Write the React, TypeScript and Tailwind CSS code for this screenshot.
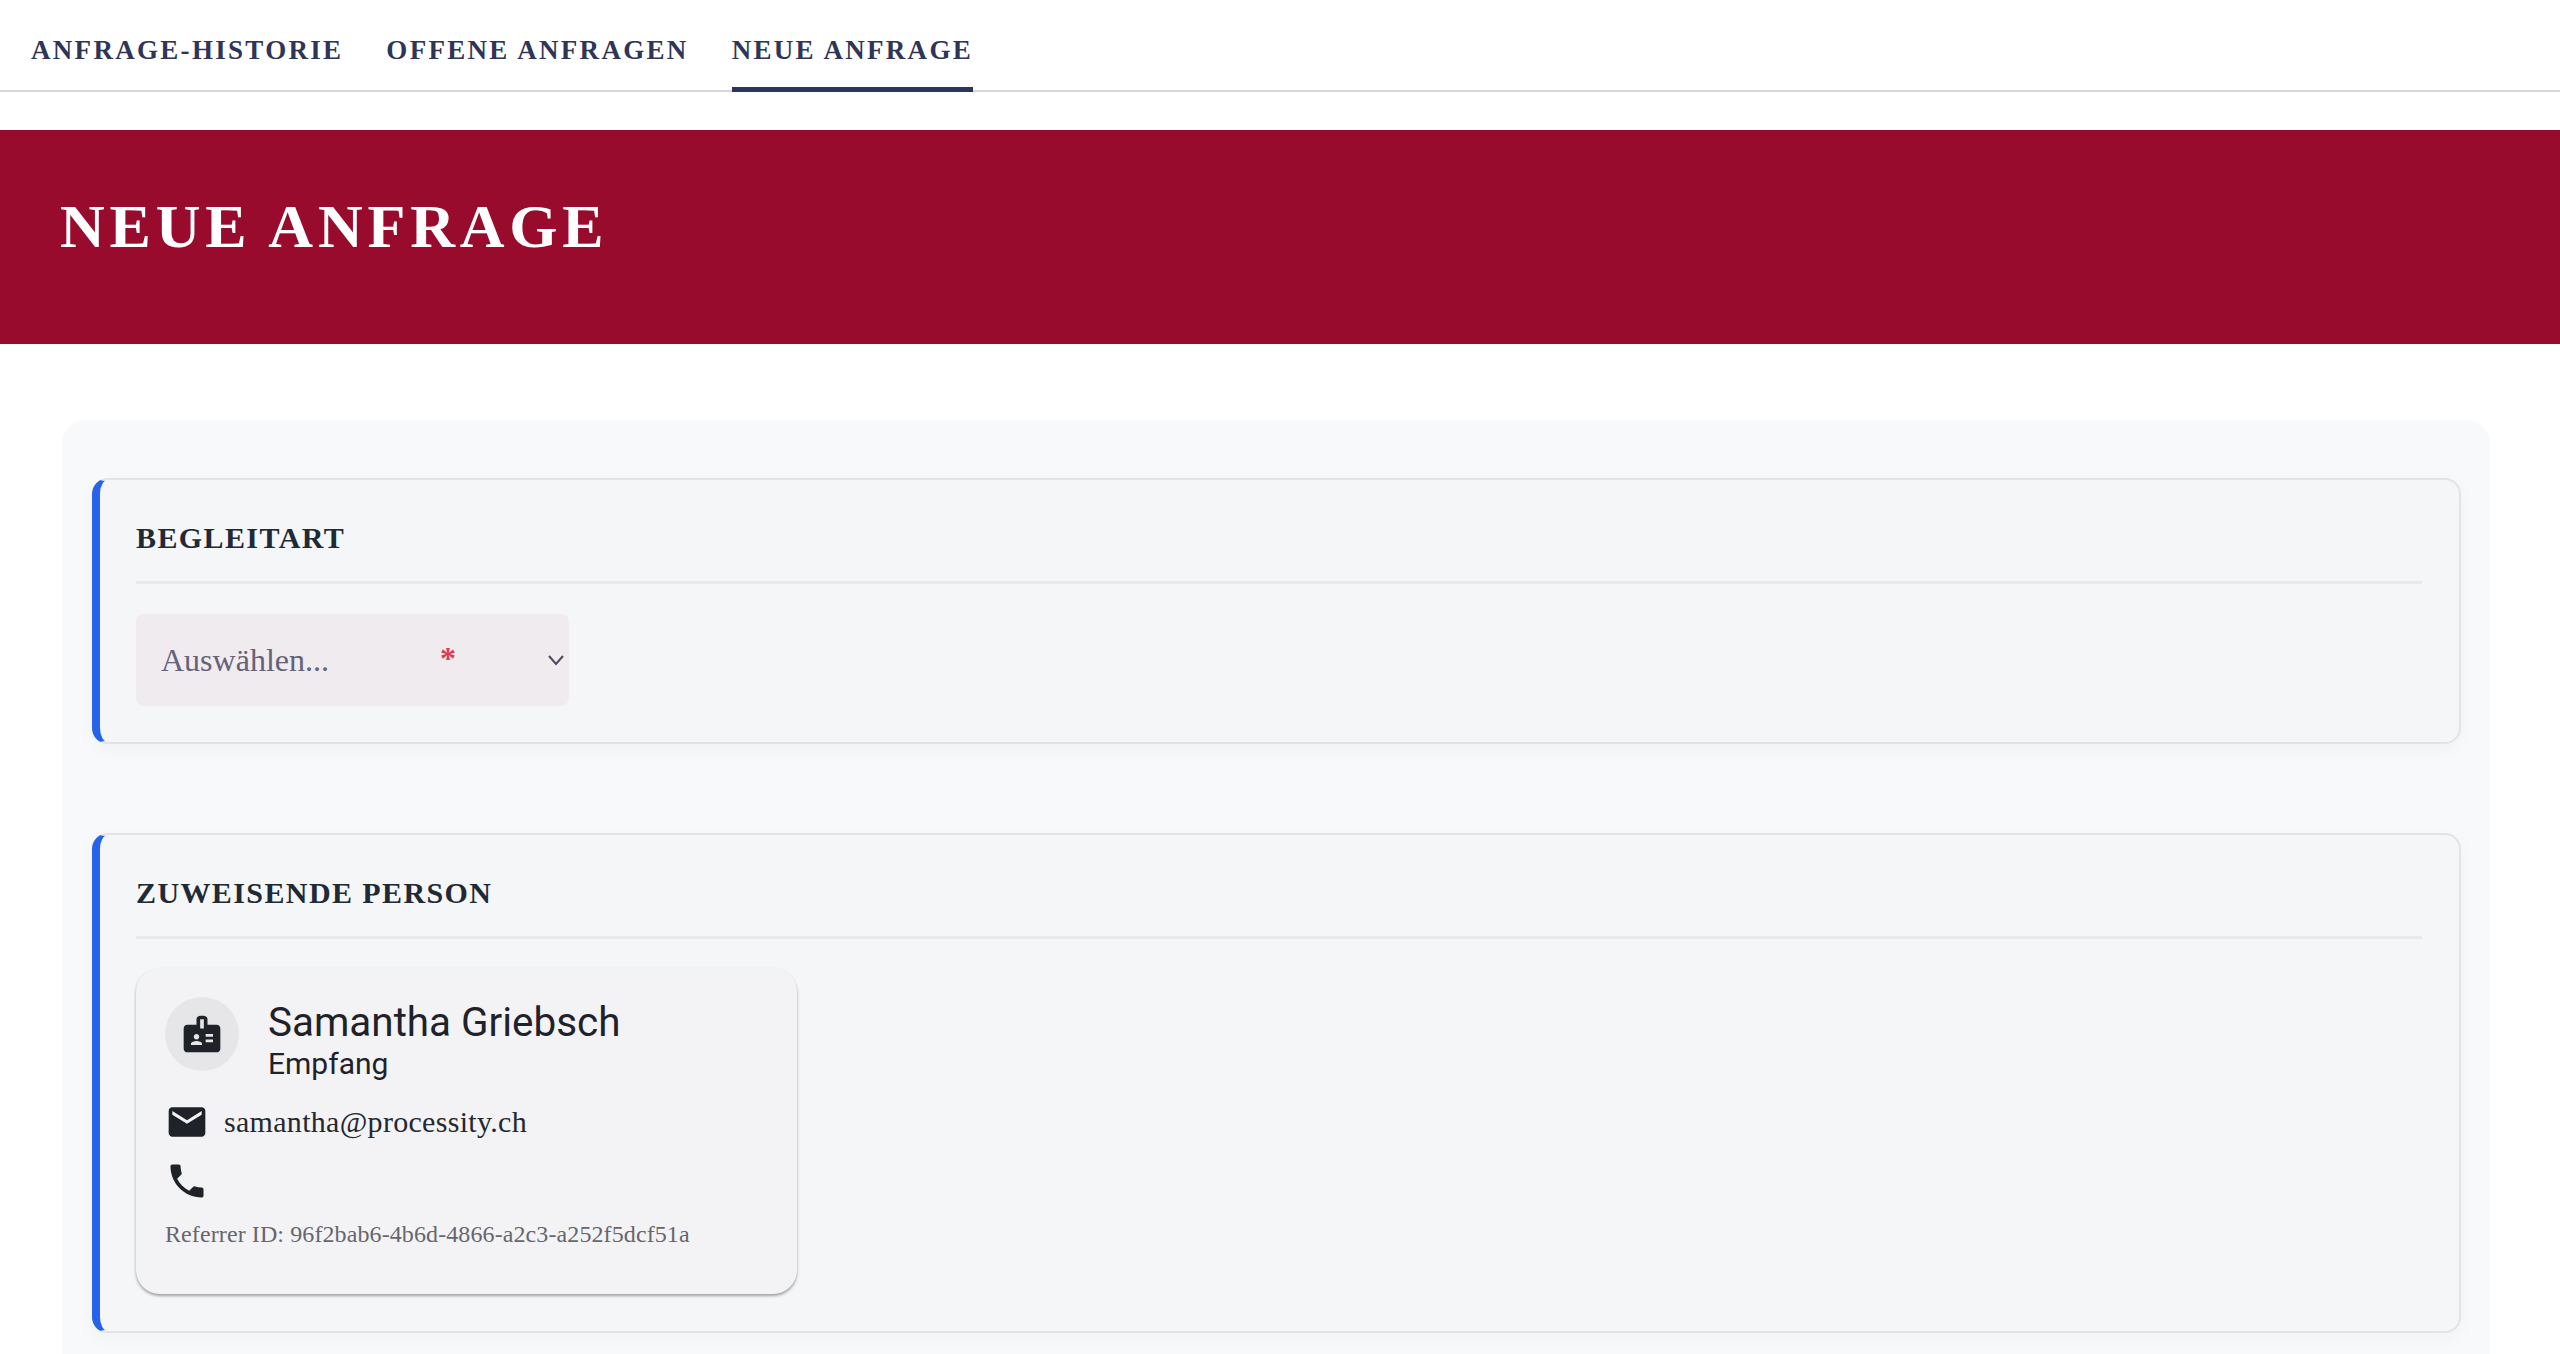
const SERIF = "font-['Liberation_Serif',Georgia,serif]";

function Tab({ label, active }: { label: string; active?: boolean }) {
  return (
    <div className={`flex h-[92px] items-center pt-[8px] text-[27px] font-bold tracking-[2.3px] text-[#2f3557] ${active ? "border-b-[5px] border-[#2f3557] pt-[13px]" : ""}`}>
      {label}
    </div>
  );
}

function Section({ title, children }: { title: string; children: React.ReactNode }) {
  return (
    <section className="rounded-[16px] border-2 border-l-[8px] border-[#e2e3e6] border-l-[#2563eb] bg-[#f5f6f8] pr-[37px] pl-[36px] shadow-[0_6px_20px_rgba(0,0,0,0.03)]">
      <h2 className="flex h-[104px] items-center border-b-[3px] border-[#e8e9ea] pt-[13px] text-[30px] font-bold tracking-[1.4px] text-[#1f2a37]">
        {title}
      </h2>
      {children}
    </section>
  );
}

export default function App() {
  return (
    <div className={`h-[1354px] overflow-hidden bg-white ${SERIF}`}>
      <nav className="flex h-[92px] gap-[43px] border-b-2 border-[#d6d6dc] pl-[31px]">
        <Tab label="ANFRAGE-HISTORIE" />
        <Tab label="OFFENE ANFRAGEN" />
        <Tab label="NEUE ANFRAGE" active />
      </nav>

      <header className="mt-[38px] flex h-[214px] items-center bg-[#990b2c] pb-[22px] pl-[60px]">
        <h1 className="text-[62px] font-bold tracking-[4.8px] text-white">NEUE ANFRAGE</h1>
      </header>

      <main className="mt-[76px] mr-[70px] ml-[62px] flex flex-col gap-[89px] rounded-t-[24px] bg-[#f8f9fb] pt-[58px] pr-[29px] pb-[40px] pl-[30px]">
        <Section title="BEGLEITART">
          <div className="pt-[30px] pb-[36px]">
            <div className="relative flex h-[92px] w-[433px] items-center rounded-[8px] bg-[#f0ebef] pl-[25px] text-[32px] text-[#65617a]">
              Auswählen...
              <span className="absolute top-[20px] left-[304px] text-[32px] font-bold text-[#e03a4e]">*</span>
              <svg className="absolute top-[36px] right-[3px] h-[20px] w-[20px]" viewBox="0 0 20 20" fill="none" stroke="#4b4b5c" strokeWidth="2">
                <path d="M3 6l7 8 7-8" />
              </svg>
            </div>
          </div>
        </Section>

        <Section title="ZUWEISENDE PERSON">
          <div className="pt-[29px] pb-[37px]">
            <div className="h-[326px] w-[661px] rounded-[24px] bg-[#f3f3f6] px-[29px] pt-[29px] shadow-[0_2px_3px_rgba(0,0,0,0.35)]">
              <div className="flex items-start gap-[29px]">
                <div className="flex h-[74px] w-[74px] items-center justify-center rounded-full bg-[#e6e6e9]">
                  <svg className="h-[44px] w-[44px] fill-[#1f2229]" viewBox="0 0 24 24">
                    <path d="M20 7h-5V4c0-1.1-.9-2-2-2h-2c-1.1 0-2 .9-2 2v3H4c-1.1 0-2 .9-2 2v11c0 1.1.9 2 2 2h16c1.1 0 2-.9 2-2V9c0-1.1-.9-2-2-2M9 12c.83 0 1.5.67 1.5 1.5S9.83 15 9 15s-1.5-.67-1.5-1.5S8.17 12 9 12m3 6H6v-.75c0-1 2-1.5 3-1.5s3 .5 3 1.5zm1-9h-2V4h2zm5 7.5h-4V15h4zm0-3h-4V12h4z" />
                  </svg>
                </div>
                <div className="mt-[3px] font-['Roboto',sans-serif] text-[#1f2229]">
                  <div className="text-[40.4px] leading-[46px]">Samantha Griebsch</div>
                  <div className="text-[30px] leading-[36px]">Empfang</div>
                </div>
              </div>
              <div className="mt-[17px] flex items-center gap-[15px] text-[30px] tracking-[0.3px] text-[#25282f]">
                <svg className="h-[44px] w-[44px] fill-[#1f2229]" viewBox="0 0 24 24">
                  <path d="M20 4H4c-1.1 0-1.99.9-1.99 2L2 18c0 1.1.9 2 2 2h16c1.1 0 2-.9 2-2V6c0-1.1-.9-2-2-2m0 4-8 5-8-5V6l8 5 8-5z" />
                </svg>
                samantha@processity.ch
              </div>
              <svg className="mt-[15px] h-[44px] w-[44px] fill-[#1f2229]" viewBox="0 0 24 24">
                <path d="M6.62 10.79c1.44 2.83 3.76 5.14 6.59 6.59l2.2-2.2c.27-.27.67-.36 1.02-.24 1.12.37 2.33.57 3.57.57.55 0 1 .45 1 1V20c0 .55-.45 1-1 1-9.39 0-17-7.61-17-17 0-.55.45-1 1-1h3.5c.55 0 1 .45 1 1 0 1.25.2 2.45.57 3.57.11.35.03.74-.25 1.02z" />
              </svg>
              <div className="mt-[13px] text-[24px] tracking-[0.1px] text-[#66666c]">Referrer ID: 96f2bab6-4b6d-4866-a2c3-a252f5dcf51a</div>
            </div>
          </div>
        </Section>
      </main>
    </div>
  );
}
